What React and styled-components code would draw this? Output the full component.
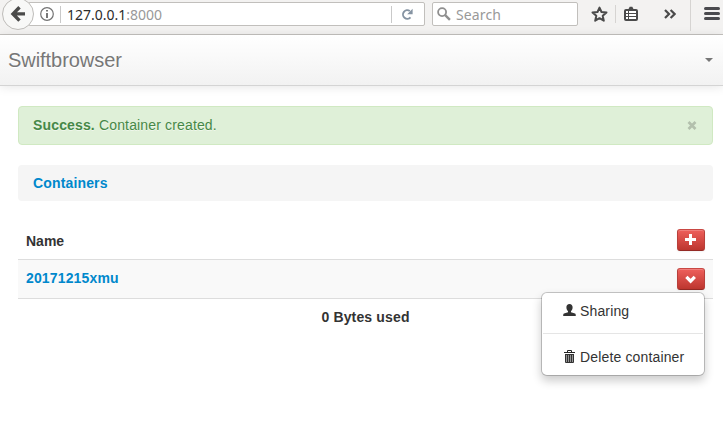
import React from "react";
import styled, { createGlobalStyle } from "styled-components";

const GlobalStyle = createGlobalStyle`
  * { box-sizing: border-box; }
  body {
    margin: 0;
    background: #fff;
    color: #333;
    font: 14px/20px "Liberation Sans", Arial, sans-serif;
    letter-spacing: 0.15px;
    overflow: hidden;
  }
`;

const Window = styled.div`
  width: 723px;
  height: 432px;
  overflow: hidden;
`;

const Toolbar = styled.header`
  display: flex;
  height: 35px;
  padding-left: 2px;
  background: #f3f2f1;
  border-bottom: 1px solid #c3c1be;
  font-family: "Noto Sans", "Open Sans", sans-serif;
`;

const BackButton = styled.div`
  display: flex;
  z-index: 1;
  align-items: center;
  justify-content: center;
  width: 32px;
  height: 32px;
  margin-top: -2px;
  border: 1px solid #bebcb9;
  border-radius: 50%;
  background: #f8f8f7;
`;

const Field = styled.div`
  display: flex;
  align-items: center;
  height: 24px;
  margin-top: 2px;
  border: 1px solid #c1bfbc;
  border-radius: 2px;
  background: #fff;
`;

const AddressField = styled(Field)`
  width: 397px;
  margin-left: -6px;
  padding-left: 11px;
`;

const SearchField = styled(Field)`
  width: 146px;
  margin-left: 7px;
  padding-left: 4px;
`;

const Separator = styled.span`
  width: 1px;
  height: 17px;
  margin: 0 6px 0 6px;
  background: #c9c9c9;
`;

const Address = styled.span`
  flex: 1;
  padding-top: 1px;
  font-size: 14px;
  line-height: 20px;
  letter-spacing: 0;
  color: #999;
`;

const Host = styled.span`
  color: #2c2c2c;
`;

const ReloadSlot = styled.span`
  display: flex;
  align-items: center;
  justify-content: center;
  width: 33px;
  height: 17px;
  padding-right: 2px;
  border-left: 1px solid #c9c9c9;
`;

const SearchLabel = styled.span`
  margin-left: 5px;
  padding-top: 1px;
  color: #999;
  font-size: 14px;
  letter-spacing: 0.12px;
`;

const Tools = styled.div`
  display: flex;
  align-items: flex-start;
  margin-left: 13px;
`;

const ToolSlot = styled.span`
  display: flex;
  width: ${(p) => p.$width}px;
  padding: ${(p) => p.$top}px 0 0 ${(p) => p.$left || 0}px;
`;

const ToolDivider = styled.span`
  flex: none;
  width: 1px;
  height: ${(p) => p.$height}px;
  margin-top: ${(p) => p.$top}px;
  background: #d6d4d2;
`;

const Navbar = styled.nav`
  display: flex;
  align-items: center;
  justify-content: space-between;
  height: 51px;
  padding: 0 10px 1px 8px;
  border-bottom: 1px solid #d4d4d4;
  background: linear-gradient(#fff, #f2f2f2);
  box-shadow: 0 1px 10px rgba(0, 0, 0, 0.1);
`;

const Brand = styled.span`
  color: #777;
  font-size: 20px;
  letter-spacing: -0.05px;
  text-shadow: 0 1px 0 #fff;
`;

const Caret = styled.span`
  border-top: 4px solid #777;
  border-right: 4px solid transparent;
  border-left: 4px solid transparent;
`;

const Content = styled.main`
  padding: 20px 10px 0 18px;
`;

const Alert = styled.div`
  display: flex;
  justify-content: space-between;
  height: 39px;
  padding: 8px 15px 8px 14px;
  border: 1px solid #d0e9c2;
  border-radius: 4px;
  background: #dff0d8;
  color: #468847;
  text-shadow: 0 1px 0 rgba(255, 255, 255, 0.5);
`;

const CloseIcon = styled.svg`
  margin-top: 6px;
`;

const Breadcrumb = styled.div`
  height: 36px;
  margin-top: 20px;
  padding: 8px 15px;
  border-radius: 4px;
  background: #f5f5f5;
`;

const Link = styled.a`
  color: #08c;
  font-weight: bold;
`;

const Table = styled.section`
  margin-top: 20px;
`;

const Row = styled.div`
  display: flex;
  justify-content: space-between;
  height: 39px;
  padding: 8px;
  border-bottom: 1px solid #ddd;
  background: ${(p) => (p.$striped ? "#f9f9f9" : "#fff")};
`;

const HeaderRow = styled(Row)`
  padding-top: 10px;
  font-weight: bold;
  letter-spacing: 0;
`;

const Usage = styled.div`
  padding: 8px;
  text-align: center;
  font-weight: bold;
`;

const ActionButton = styled.button`
  display: flex;
  align-items: center;
  justify-content: center;
  width: 28px;
  height: 22px;
  padding: 0;
  border: 1px solid;
  border-color: #c94843 #b8403b #942a25;
  border-radius: 3px;
  background: linear-gradient(#ee5f5b, #bd362f);
  box-shadow: inset 0 1px 0 rgba(255, 255, 255, 0.2), 0 1px 2px rgba(0, 0, 0, 0.05);
`;

const HeaderAction = styled(ActionButton)`
  margin-top: -2px;
`;

const Actions = styled.div`
  position: relative;
`;

const Menu = styled.div`
  position: absolute;
  top: 24px;
  right: 0;
  width: 164px;
  height: 84px;
  padding: 5px 0;
  border: 1px solid rgba(0, 0, 0, 0.2);
  border-radius: 6px;
  background: #fff;
  background-clip: padding-box;
  box-shadow: 0 5px 10px rgba(0, 0, 0, 0.2);
`;

const MenuItem = styled.div`
  display: flex;
  align-items: center;
  height: 26px;
  padding: 0 21px;
  white-space: nowrap;

  svg {
    flex: none;
    margin: -2px 4px 0 0;
  }
`;

const MenuDivider = styled.div`
  height: 1px;
  margin: 9px 1px 10px;
  background: #e5e5e5;
`;

const MenuSlot = styled.span`
  display: flex;
  padding: 7px 0 0 13px;
`;

function BackIcon() {
  return (
    <svg width="16" height="18" viewBox="0 0 16 18" fill="none" stroke="#4a4a4a" strokeWidth="3.4">
      <path d="M9.5 2.2 3 8.900l6.500 6.700M3.400 8.900H15" />
    </svg>
  );
}

function InfoIcon() {
  return (
    <svg width="14" height="14" viewBox="0 0 14 14">
      <circle cx="7" cy="7" r="6.3" fill="none" stroke="#737373" strokeWidth="1.2" />
      <path d="M6 3h2v1.600H6zM6 6h2v5H6z" fill="#777" />
    </svg>
  );
}

function ReloadIcon() {
  return (
    <svg width="12" height="13" viewBox="0 0 12 13">
      <path d="M9.500 9.400A4.300 4.300 0 1 1 8.800 3" fill="none" stroke="#8593a2" strokeWidth="1.9" />
      <path d="M11.600.8v5.400H6.200z" fill="#8593a2" />
    </svg>
  );
}

function SearchIcon() {
  return (
    <svg width="14" height="14" viewBox="0 0 14 14" fill="none" stroke="#8f8f8f">
      <circle cx="5.1" cy="5.1" r="4" strokeWidth="1.8" />
      <path d="m8.200 8.200 4.700 4.600" strokeWidth="2.4" />
    </svg>
  );
}

function StarIcon() {
  return (
    <svg width="17" height="17" viewBox="0 0 17 17">
      <path d="m8.500 1.600 2 4.400 5 .5-3.800 3.300 1.100 4.900-4.300-2.500-4.300 2.500 1.100-4.900L1.500 6.500l5-.5z" fill="none" stroke="#4a4a4a" strokeWidth="2" strokeLinejoin="round" />
    </svg>
  );
}

function ClipboardIcon() {
  return (
    <svg width="14" height="15" viewBox="0 0 14 15">
      <path d="M2 3h2.500l1.200-2.200h2.600L9.500 3H12a2 2 0 0 1 2 2v8a2 2 0 0 1-2 2H2a2 2 0 0 1-2-2V5a2 2 0 0 1 2-2" fill="#4a4a4a" />
      <path d="M2 5h2v2H2zm3 0h7v2H5zM2 8h2v2H2zm3 0h7v2H5zm-3 3h2v2H2zm3 0h7v2H5z" fill="#fff" />
    </svg>
  );
}

function MoreIcon() {
  return (
    <svg width="12" height="10" viewBox="0 0 12 10" fill="none" stroke="#4a4a4a" strokeWidth="2.2">
      <path d="m1 1 4 4-4 4M6.600 1l4 4-4 4" />
    </svg>
  );
}

function MenuIcon() {
  return (
    <svg width="16" height="13" viewBox="0 0 16 13" fill="#4a4a4e">
      <rect width="16" height="3" rx="1.5" />
      <rect y="5" width="16" height="3" rx="1.5" />
      <rect y="10" width="16" height="3" rx="1.5" />
    </svg>
  );
}

function PlusIcon() {
  return (
    <svg width="12" height="12" viewBox="0 0 12 12">
      <path d="M4 0h3v4h4v3H7v4H4V7H0V4h4z" fill="#fff" />
    </svg>
  );
}

function ChevronIcon() {
  return (
    <svg width="12" height="10" viewBox="0 0 12 10">
      <path d="m1.400 2.900 4.200 4.200 4.200-4.200" fill="none" stroke="#fff" strokeWidth="3.3" />
    </svg>
  );
}

function UserIcon() {
  return (
    <svg width="13" height="13" viewBox="0 0 13 13">
      <path d="M6.500 0c2 0 3.100 1.300 3.100 3.200 0 1.700-.6 3.100-1.600 3.900v1.200l4 1.300c.6.300.8 1.200.8 2.400H.2c0-1.200.2-2.100.8-2.400l4-1.300V7.100c-1-.8-1.600-2.200-1.600-3.900C3.400 1.300 4.500 0 6.500 0" fill="#333" />
    </svg>
  );
}

function TrashIcon() {
  return (
    <svg width="13" height="13" viewBox="0 0 13 13">
      <path d="M4.500 2V.5h4V2M1 2.500h11" fill="none" stroke="#222" strokeWidth="1" />
      <path d="M2 4h9v8a1 1 0 0 1-1 1H3a1 1 0 0 1-1-1z" fill="#333" />
      <path d="M3.500 5v7m2-7v7m2-7v7m2-7v7" stroke="#a0a0a0" strokeWidth=".9" />
    </svg>
  );
}

export default function App() {
  return (
    <Window>
      <GlobalStyle />
      <Toolbar>
        <BackButton><BackIcon /></BackButton>
        <AddressField>
          <InfoIcon />
          <Separator />
          <Address><Host>127.0.0.1</Host>:8000</Address>
          <ReloadSlot><ReloadIcon /></ReloadSlot>
        </AddressField>
        <SearchField>
          <SearchIcon />
          <SearchLabel>Search</SearchLabel>
        </SearchField>
        <Tools>
          <ToolSlot $width={24} $top={6}><StarIcon /></ToolSlot>
          <ToolDivider $top={5} $height={18} />
          <ToolSlot $width={40} $top={6} $left={8}><ClipboardIcon /></ToolSlot>
          <ToolSlot $width={34} $top={9} $left={8}><MoreIcon /></ToolSlot>
        </Tools>
        <ToolDivider $top={0} $height={31} />
        <MenuSlot><MenuIcon /></MenuSlot>
      </Toolbar>
      <Navbar>
        <Brand>Swiftbrowser</Brand>
        <Caret />
      </Navbar>
      <Content>
        <Alert>
          <span><strong>Success.</strong> Container created.</span>
          <CloseIcon width="10" height="9" viewBox="0 0 10 9">
            <path d="m1.500 1 7 7m0-7-7 7" stroke="#b3c0ad" strokeWidth="2.7" />
          </CloseIcon>
        </Alert>
        <Breadcrumb><Link>Containers</Link></Breadcrumb>
        <Table>
          <HeaderRow>
            <span>Name</span>
            <HeaderAction aria-label="Create container"><PlusIcon /></HeaderAction>
          </HeaderRow>
          <Row $striped>
            <Link>20171215xmu</Link>
            <Actions>
              <ActionButton aria-label="Container actions"><ChevronIcon /></ActionButton>
              <Menu>
                <MenuItem><UserIcon />Sharing</MenuItem>
                <MenuDivider />
                <MenuItem><TrashIcon />Delete container</MenuItem>
              </Menu>
            </Actions>
          </Row>
          <Usage>0 Bytes used</Usage>
        </Table>
      </Content>
    </Window>
  );
}
